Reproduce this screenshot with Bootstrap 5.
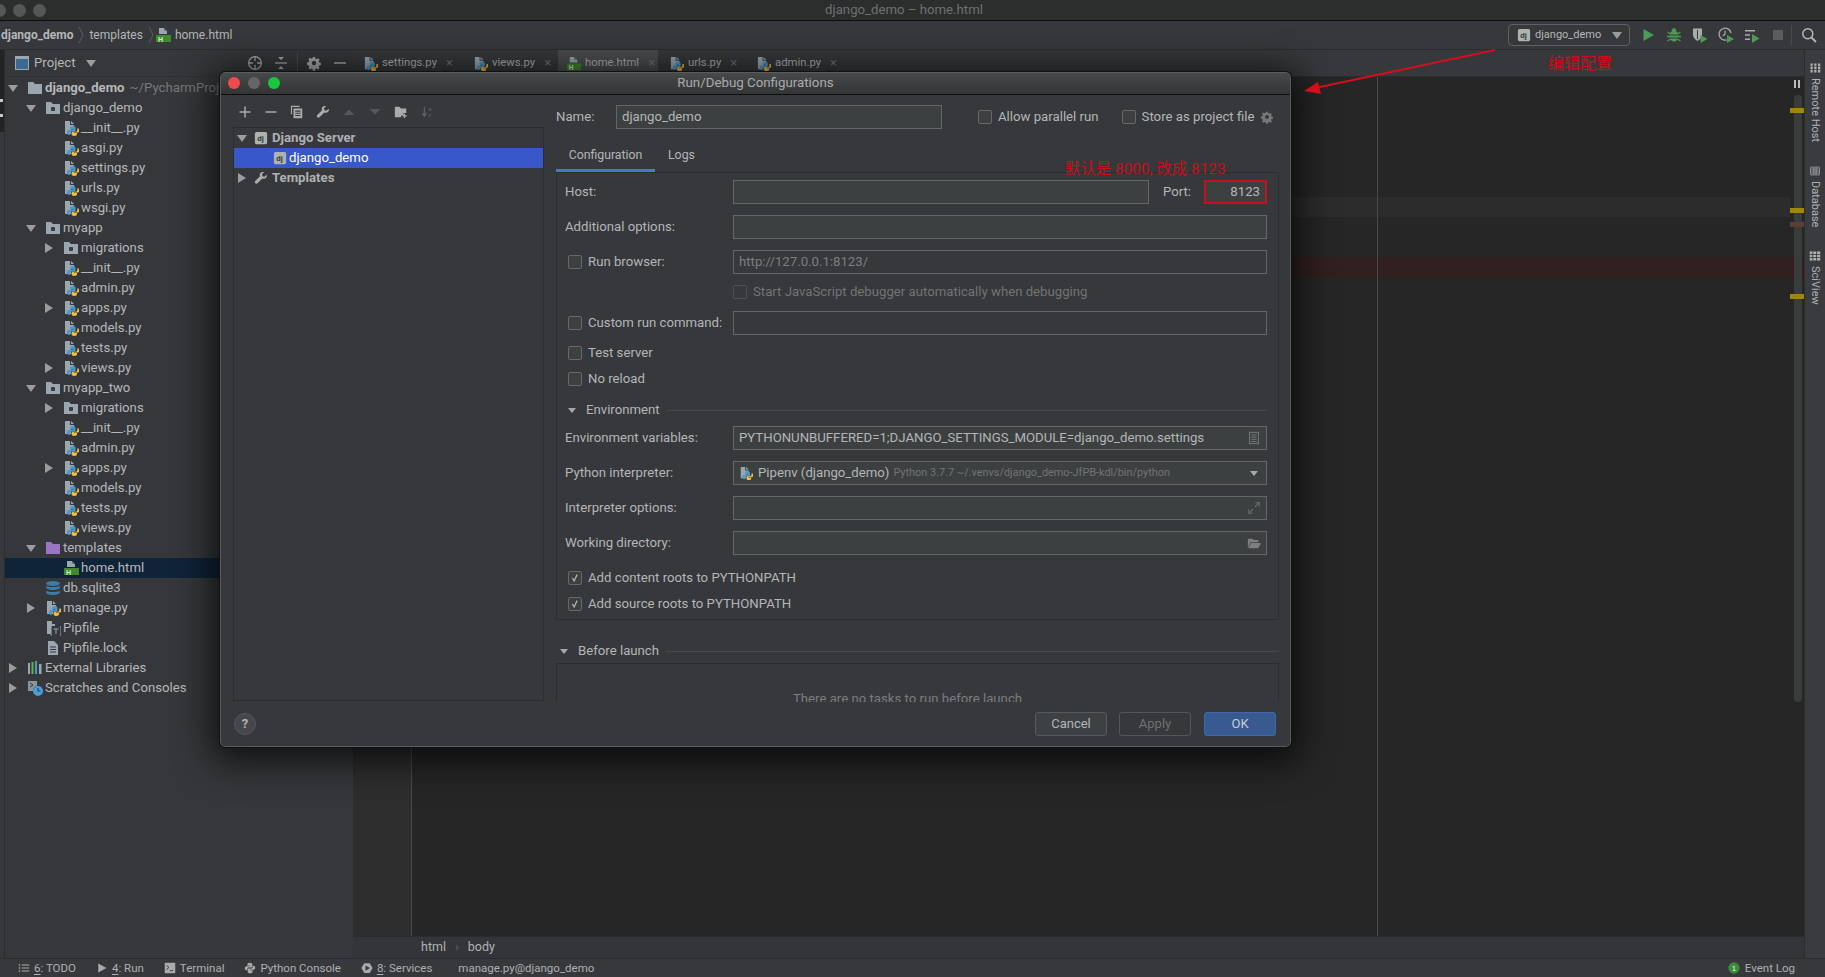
<!DOCTYPE html>
<html lang="en">
<head>
<meta charset="utf-8">
<title>django_demo – home.html</title>
<link href="https://cdn.jsdelivr.net/npm/bootstrap@5.3.0/dist/css/bootstrap.min.css" rel="stylesheet">
<style>
html,body{height:100%;overflow:hidden}
body{background:#36383b;color:#b4b6b8;font-family:Roboto,"Liberation Sans",sans-serif;font-size:13.2px;line-height:20px}
.wbar{height:21px;background:#2c2d2d;border-bottom:1px solid #0c0c0c}
.wdot{width:13px;height:13px;border-radius:50%;background:#565656}
.wdots{width:0;margin-left:-7px;gap:7px}
.wtitle{color:#707070;font-size:13.2px;line-height:20px;padding-right:10px}
.tbar{height:29px;background:#36383b;border-bottom:1px solid #2b2c2e;font-size:12px;padding-left:1px}
.tbar>.ico16{margin-left:-4px}
.crumbsep{width:7px;height:20px;margin:0 4px 0 5px}
.slot{width:26px;height:24px;flex:none}
.ico16{width:16px;height:16px;flex:none}
.ico14{width:14px;height:14px;flex:none}
.tb-right{padding-right:3px}
.runcombo{width:122px;height:22px;border:1px solid #5e6062;border-radius:4px;padding:0 7px 0 8px;margin-right:5px;font-size:11px;color:#b4b6b8}
.tri-d{width:0;height:0;border-left:5px solid transparent;border-right:5px solid transparent;border-top:7px solid #9a9c9e}
.tri-r{width:0;height:0;border-top:5px solid transparent;border-bottom:5px solid transparent;border-left:8px solid #9a9c9e}
.tri-s{width:0;height:0;border-left:4px solid transparent;border-right:4px solid transparent;border-top:5px solid #a6a8aa}
.workarea{height:907px}
.lstrip{width:5px;background:#36383b;border-right:1px solid #2b2c2e}
.lstrip-top{height:82px;background:#222324;padding-top:49px}
.lstrip-top span{display:block;width:3px;height:3px;background:#c8c8c8;margin-bottom:12px}
.pane{width:348px;background:#35373a}
.phead{height:27px;border-bottom:1px solid #2f3134;padding-left:10px;font-size:13.2px}
.phead-title{width:52px;margin-left:5px}
.phead-tools{margin-left:auto}
.vsep{width:1px;height:20px;background:#4a4c4e}
.phead-tools .vsep{margin:0 3px}
.tree{margin:0;padding:1px 0 0;font-size:13.2px}
.trow{height:20px;white-space:nowrap;color:#b6b8ba}
.tw{width:10px;flex:none;margin-right:9px;display:flex;justify-content:center}
.trow .ico14{width:16px;height:16px;margin-right:2px}
.l0{padding-left:3px}.l1{padding-left:21px}.l2{padding-left:39px}
.trow.sel{background:#0f2339}
.trow.root span{font-weight:700}
.hint{color:#77797b;margin-left:5px}
.trow.root span.hint{font-weight:400}
.edcol{min-width:0}
.tabs{height:27px;background:#36383b;border-bottom:1px solid #2b2c2e;font-size:11.3px;padding-left:6px}
.tabx{padding:0 0 0 4px;height:26px;color:#b0b2b4;flex:none}
.tabx.on{background:#4b4d50}
.tabx .ico14{width:15px;height:15px}
.tabx .xx{margin:0 0 0 9px;color:#6d6f71;font-size:13px}
.tab-a{width:110px}.tab-b{width:89px}.tab-c{width:100px}.tab-d{width:87px;margin-left:7px}.tab-e{width:100px}
.gutter{width:59px;background:#2e2e2f;border-right:1px solid #4a4a4a}
.code{background:#262626;position:relative;overflow:hidden}
.caretrow{height:20px;margin-top:120px;background:#2c2c2c;margin-right:14px}
.errrow{height:20px;margin-top:40px;background:#321f1f}
.marginline{position:absolute;left:965px;top:0;bottom:0;width:1px;background:#4a4a4a}
.scrolltrack{position:absolute;right:2px;top:18px;width:8px;height:607px;border-radius:4px;background:#3a3b3b}
.pausebar{position:absolute;right:4px;top:3px;width:6px;height:8px;border-left:2px solid #bcbcbc;border-right:2px solid #bcbcbc}
.mark{position:absolute;right:0;width:14px;height:2px;background:#a08510}
.m1{top:31px}.m2{top:131px}.m3{top:145px;background:#5a3f38}.m4{top:217px}
.bread{height:22px;background:#333538;border-top:1px solid #2a2b2d;padding:0 0 2px 68px;font-size:12.5px;color:#b0b2b4;line-height:18px}
.bread .sp{margin:0 9px;color:#666}
.rstrip{width:21px;background:#393b3e;border-left:1px solid #2b2c2e;padding-top:12px;font-size:11px;color:#b0b2b4}
.rstrip .ico14{width:12px;height:12px}
.vlabel{writing-mode:vertical-rl;line-height:14px;white-space:nowrap;margin-top:4px}
.v1{margin-bottom:23px}.v2{margin-bottom:22px}
.status{height:19px;background:#36383b;border-top:1px solid #2b2c2e;font-size:11.5px;padding:0 30px 0 18px;color:#aeb0b2;line-height:18px}
.sitem{margin-right:20px}
.sitem.wide{margin-right:26px}
.sitem .ico14{width:12px;height:12px;margin-right:4px}
.sitem u{text-underline-offset:2px}
.dialog{position:absolute;left:220px;top:72px;width:1071px;height:675px;background:#36383b;border-radius:5px;border:1px solid #5a5c5e;outline:1px solid #111;box-shadow:0 6px 36px 8px rgba(0,0,0,.72);overflow:hidden;font-size:13.2px;z-index:5}
.dtitle{height:22px;background:linear-gradient(#47494b,#333436);border-bottom:1px solid #0e0e0e;position:relative;color:#a9abad;font-size:13.3px;line-height:20px}
.tl{width:12px;height:12px;border-radius:50%}
.tls{position:absolute;left:7px;top:4px;gap:8px}
.tl-r{background:#f04a4a}.tl-g{background:#646567}.tl-v{background:#1bc63f}
.dbody{height:607px}
.dleft{width:323px;padding-left:11px;flex:none}
.dtools{height:32px;padding-top:1px}
.dtree{width:311px;height:574px;border:1px solid #2c2d2f;margin-left:1px}
.drow{height:20px;white-space:nowrap;padding-left:3px;color:#b2b4b6}
.drow b{font-weight:700;color:#aeb0b2}
.drow .tw{margin-right:7px;margin-left:0}
.drow.on{background:#3857c8;color:#fff;padding-left:39px}
.drow .dj{margin-right:4px}
.drow.on .dj{margin-right:2px}
.dright{width:723px;margin-left:12px;overflow:hidden;flex:none}
.namerow{height:24px;margin-top:10px}
.lb-name{width:60px}
.f-name{width:326px}
.form-control.fld{height:24px;min-height:24px;padding:0 5px;background:#3d4041;border:1px solid #646668;border-radius:0;color:#b4b6b8;font-size:13.2px;line-height:22px;box-shadow:none}
.form-control.fld.dimf{background:#36383b}
.form-control.fld.lite{background:#36383b;color:#7d7f81}
.fld.withend{display:flex;align-items:center;justify-content:space-between}
.chk{display:flex;align-items:center;height:20px;white-space:nowrap;margin-left:3px}
.form-check-input.cbx{width:14px;height:14px;margin:0 6px 0 0;background-color:#3d4041;border:1px solid #66686a;border-radius:2px;box-shadow:none;flex:none}
.form-check-input.cbx:checked{background-color:#3d4041;border-color:#66686a;background-size:12px;background-image:url("data:image/svg+xml,%3csvg xmlns='http://www.w3.org/2000/svg' viewBox='0 0 14 14'%3e%3cpath fill='none' stroke='%23bbb' stroke-width='1.4' d='M4 7l2 3.5L9.5 3'/%3e%3c/svg%3e")}
.form-check-input.cbx.off{border-color:#4c4e50;background-color:#36383b}
.gp1{margin-left:36px}.gp2{margin-left:23px}
.gear{margin-left:6px;opacity:.55}
.dtabs{height:43px;margin:0;padding:0;align-items:flex-end;border:0}
.dtabs .nav-link{padding:0;height:29px;line-height:24px;color:#b4b6b8;font-size:12.3px;border:0;border-radius:0;background:none}
.dtabs .t1{width:99px;text-align:center;border-bottom:3px solid #4a78c2}
.dtabs .t2{margin-left:13px}
.dpanel{height:448px;border:1px solid #2c2d2f;padding:7px 11px 0 8px}
.fr{height:24px}
.lbl{width:168px;flex:none;white-space:nowrap}
.m11{margin-top:11px}.m8{margin-top:8px}.m9{margin-top:9px}.m6{margin-top:6px}.m13{margin-top:13px}.m21{margin-top:21px}
.jsrow{height:20px;margin-top:8px;padding-left:168px;color:#727476}
.f-host{width:416px}
.lb-port{margin-left:14px;width:41px}
.f-port{width:63px;text-align:right;padding-right:5px!important;border:2px solid #c80f1c!important;line-height:20px!important}
.sect{height:20px;white-space:nowrap}
.sect .tri-s{margin-right:10px}
.sect.env{margin-left:3px}
.sect .rule{height:1px;background:#48494b;margin-left:7px}
.ghostnote{height:100px;border:1px solid #2c2d2f;padding:25px 20px 0 0;color:#7b7d7f;margin-top:2px;text-align:center}
.sect.bef{margin-left:4px}
.ifaded{font-size:10.9px;color:#727476;margin-left:4px}
.pyenv{margin-right:5px}
.fld .tri-s{margin-right:3px}
.dfoot{height:44px;padding:11px 14px 0 13px}
.helpb{width:22px;height:22px;border-radius:50%;background:#45484a;border:1px solid #55575a;color:#b0b2b4;font-size:13px;font-weight:700;line-height:20px;padding:0;text-align:center}
.btn.dbtn{width:72px;height:24px;padding:0;border-radius:3px;font-size:13px;line-height:22px;background:#3e4143;border:1px solid #585a5c;color:#b4b6b8}
.btn.dbtn.dis{background:#36383b;border-color:#545658;color:#6f7173;margin-left:12px;opacity:1}
.btn.dbtn.okb{background:#385a90;border-color:#3e68a8;color:#c8ccd2;margin-left:13px}
.dfoot .btngrp{margin-top:-1px}
.anno{position:absolute;color:#c80f1c;font-family:Roboto,"Noto Sans CJK SC",sans-serif;line-height:20px;white-space:nowrap;z-index:7}
.a1{left:1548px;top:54px;font-size:16px}
.a2{left:1065px;top:159px;font-size:15.4px}
.arrowsvg{position:absolute;left:1295px;top:44px;width:210px;height:56px;z-index:6}
</style>
</head>
<body class="d-flex flex-column">
<svg width="0" height="0" class="position-absolute">
<defs>
<symbol id="py" viewBox="0 0 16 16"><path d="M2 1h5v4h4v2H8v7H2z" fill="#9aa7b0"/><path d="M8 1l3 3H8z" fill="#9aa7b0"/><path d="M10 6c-2 0-3 .7-3 2v1.4h3.2v.6H6c-1.300 0-2 1-2 2.200S4.700 15 6 15h.8v-1.600c0-1 .8-1.800 1.800-1.800h2.500c.8 0 1.400-.6 1.400-1.400V8c0-1.400-1-2-2.500-2z" fill="#4a98d0"/><path d="M11 16c2 0 3-.5 3-1.700v-1.300h-3.200v-.5H15c1 0 1.500-1 1.500-2s-.5-2-1.500-2h-.7v1.500c0 1-.8 1.800-1.800 1.800H10c-.8 0-1.400.6-1.400 1.400v1.100C8.600 15.500 9.600 16 11 16z" fill="#f0c040"/></symbol>
<symbol id="html" viewBox="0 0 16 16"><path d="M4 1h5v3h3v3H4z" fill="#9aa7b0"/><path d="M9 1l3 3H9z" fill="#6f7a82"/><rect x="1" y="8" width="15" height="7" fill="#3f8a2e"/><text x="3" y="14.500" font-size="7" font-weight="700" fill="#d8e8d0" font-family="Liberation Sans">H</text></symbol>
<symbol id="fold" viewBox="0 0 16 16"><path d="M1 2h5l2 2h7v10H1z" fill="#9aa7b0"/></symbol>
<symbol id="mod" viewBox="0 0 16 16"><path d="M1 2h5l2 2h7v10H1z" fill="#9aa7b0"/><rect x="6" y="7" width="4" height="4" rx="1" fill="#3a3c3f"/></symbol>
<symbol id="pur" viewBox="0 0 16 16"><path d="M1 2h5l2 2h7v10H1z" fill="#9876c4"/></symbol>
<symbol id="db" viewBox="0 0 16 16"><ellipse cx="8" cy="3.500" rx="6.800" ry="2.500" fill="#3f7ca3"/><path d="M1.200 5v2.500C1.200 9 4.200 10 8 10s6.800-1 6.800-2.500V5C14.800 6.500 11.800 7 8 7S1.200 6.500 1.200 5z" fill="#3f7ca3"/><path d="M1.200 10v2.500C1.200 14 4.200 15 8 15s6.800-1 6.800-2.500V10c0 1.500-3 2-6.800 2s-6.800-.5-6.800-2z" fill="#3f7ca3"/></symbol>
<symbol id="pipf" viewBox="0 0 16 16"><path d="M2 1h5v3h3v2H6v8H2z" fill="#9aa7b0"/><path d="M7 7H6v8h1M15 7h1v8h-1" fill="none" stroke="#9aa7b0"/><path d="M8.500 9h5M11 9v5" stroke="#9aa7b0" fill="none"/></symbol>
<symbol id="doc" viewBox="0 0 16 16"><path d="M3 1h6l4 4v10H3z" fill="#9aa7b0"/><path d="M5 7h6M5 9.500h6M5 12h6" stroke="#36383b"/></symbol>
<symbol id="libs" viewBox="0 0 16 16"><rect x="1" y="3" width="2" height="11" fill="#9aa7b0"/><rect x="4.500" y="2" width="2" height="12" fill="#62b543"/><rect x="8" y="1" width="2" height="13" fill="#4a98d0"/><rect x="12" y="4" width="2.500" height="10" fill="#9aa7b0"/></symbol>
<symbol id="scr" viewBox="0 0 16 16"><path d="M1 1h9v5a5 5 0 0 0-4 5H1z" fill="#8a949c"/><path d="M3 3l3 2-3 2" stroke="#36383b" fill="none"/><circle cx="11" cy="11" r="5" fill="#4a9fd8"/><path d="M11 8v3h2.500" stroke="#23425a" fill="none" stroke-width="1.200"/></symbol>
<symbol id="dj" viewBox="0 0 16 16"><rect x="1" y="1" width="14" height="14" rx="2" fill="#afb1b3"/><text x="3.800" y="11" font-size="8.500" font-weight="700" fill="#1f3b2a" font-family="Liberation Sans">dj</text></symbol>
<symbol id="wr" viewBox="0 0 16 16"><path d="M14.500 4.200l-2.600 2.400-2.200-.6-.6-2.200L11.500 1.300C9.600.6 7.500 1.200 6.800 3c-.4 1-.3 2 .1 2.900L1.400 11.400c-.7.700-.7 1.900 0 2.600s1.900.7 2.600 0l5.500-5.500c.9.400 2 .5 3 .1 1.800-.7 2.800-2.700 2-4.400z" fill="#a9abad"/></symbol>
<symbol id="tgt" viewBox="0 0 16 16"><circle cx="8" cy="8" r="6.300" fill="none" stroke="#a9abad" stroke-width="1.300"/><path d="M8 1v5M8 10v5M1 8h5M10 8h5" stroke="#a9abad" stroke-width="1.300"/></symbol>
<symbol id="clps" viewBox="0 0 16 16"><path d="M2 8h12" stroke="#a9abad" stroke-width="1.300"/><path d="M5 2l3 3 3-3zM5 14l3-3 3 3z" fill="#a9abad"/></symbol>
<symbol id="gr" viewBox="0 0 16 16"><path d="M6.700 1h2.600l.4 2 1.300.6 1.800-1.100 1.800 1.800-1.100 1.800.6 1.300 2 .4v2.600l-2 .4-.6 1.300 1.100 1.800-1.800 1.800-1.800-1.100-1.300.6-.4 2H6.700l-.4-2-1.300-.6-1.800 1.100-1.800-1.800 1.100-1.800-.6-1.300-2-.4V7.200l2-.4.6-1.300-1.100-1.800 1.800-1.800 1.800 1.100 1.300-.6z" fill="#a9abad" transform="translate(1.200 1.200) scale(.85)"/><circle cx="8" cy="8" r="2.200" fill="#36383b"/></symbol>
<symbol id="run" viewBox="0 0 16 16"><path d="M3.500 2v12L14 8z" fill="#499c54"/></symbol>
<symbol id="run2" viewBox="0 0 16 16"><path d="M3 2v12L14 8z" fill="#a9abad"/></symbol>
<symbol id="bug" viewBox="0 0 16 16"><ellipse cx="8" cy="9" rx="4.500" ry="5.500" fill="#499c54"/><circle cx="8" cy="3.500" r="2.300" fill="#499c54"/><path d="M1.500 5l3 2M14.500 5l-3 2M1 9.500h3M15 9.500h-3M1.500 14l3-2M14.500 14l-3-2" stroke="#499c54" stroke-width="1.300"/><path d="M3.500 8h9M3.500 11h9" stroke="#36383b"/></symbol>
<symbol id="cov" viewBox="0 0 16 16"><path d="M1 1.500h9v6c0 3-2 5-4.500 6.500C3 12.500 1 10.500 1 7.500z" fill="#a9abad"/><path d="M5.500 3v9" stroke="#36383b"/><path d="M8.500 8v8l7-4z" fill="#499c54"/></symbol>
<symbol id="prof" viewBox="0 0 16 16"><path d="M8.500 13A6 6 0 1 1 13 6" fill="none" stroke="#a9abad" stroke-width="1.300"/><path d="M7 3.500V7l-2 2" fill="none" stroke="#a9abad" stroke-width="1.200"/><path d="M9 8v8l7-4z" fill="#499c54"/></symbol>
<symbol id="conc" viewBox="0 0 16 16"><path d="M1 3h10v1.500H1zM1 7.200h5v1.500H1zM1 11.500h5V13H1z" fill="#a9abad"/><path d="M8 7v9l7.500-4.500z" fill="#499c54"/></symbol>
<symbol id="mag" viewBox="0 0 16 16"><circle cx="6.800" cy="6.800" r="5" fill="none" stroke="#b4b6b8" stroke-width="1.500"/><path d="M10.500 10.500l4.500 4.500" stroke="#b4b6b8" stroke-width="1.800"/></symbol>
<symbol id="copy" viewBox="0 0 16 16"><path d="M1 1.500h10M1.700 1.500v9" stroke="#a9abad" stroke-width="1.300" fill="none"/><path d="M4 4h10v11H4z" fill="#a9abad"/><path d="M6 7h6M6 9.500h6M6 12h6" stroke="#36383b" stroke-width="1.200"/></symbol>
<symbol id="nfold" viewBox="0 0 16 16"><path d="M1 2h5l2 2h6v5h-3v3H8v2H1z" fill="#a9abad"/><path d="M12 10v5M9.500 12.500h5" stroke="#a9abad" stroke-width="1.400"/></symbol>
<symbol id="srt" viewBox="0 0 16 16"><path d="M5 2v10" stroke="#5f6163" stroke-width="1.400"/><path d="M1.800 9.500L5 14l3.200-4.500z" fill="#5f6163"/><text x="9.500" y="6.800" font-size="6.500" fill="#5f6163" font-family="Liberation Sans">a</text><text x="9.500" y="14" font-size="6.500" fill="#5f6163" font-family="Liberation Sans">z</text></symbol>
<symbol id="listi" viewBox="0 0 16 16"><path d="M1 3h2v2H1zM1 7h2v2H1zM1 11h2v2H1zM5 3.300h10v1.400H5zM5 7.300h10v1.400H5zM5 11.300h10v1.400H5z" fill="#a9abad"/></symbol>
<symbol id="term" viewBox="0 0 16 16"><rect x="1" y="1" width="14" height="14" fill="#a9abad"/><path d="M3.500 4.500l3 2.800-3 2.800" fill="none" stroke="#36383b" stroke-width="1.300"/><path d="M8 11.500h4" stroke="#36383b" stroke-width="1.300"/></symbol>
<symbol id="pyg" viewBox="0 0 16 16"><path d="M8 1C5.500 1 4.500 2 4.500 3.500V5H8.300v.7H3.200C2 5.700 1 6.700 1 8.300S2 11 3.200 11h1.300V9.300c0-1.200 1-2 2-2h3c1 0 1.700-.7 1.700-1.700V3.500C11 2 10 1 8 1z" fill="#a9abad"/><path d="M8 15c2.500 0 3.500-1 3.500-2.500V11H7.700v-.7h5.100c1.200 0 2.200-1 2.200-2.600S14 5 12.800 5h-1.100v1.700c0 1.200-1 2-2 2h-3c-1 0-1.700.7-1.700 1.700v2.100C5 14 6 15 8 15z" fill="#a9abad"/></symbol>
<symbol id="svc" viewBox="0 0 16 16"><path d="M4.500 1.500h7L15.500 8l-4 6.500h-7L.5 8z" fill="#a9abad"/><path d="M6 4.500v7L12 8z" fill="#36383b"/></symbol>
<symbol id="vars" viewBox="0 0 16 16"><rect x="3" y="1.500" width="10" height="13" fill="none" stroke="#7d7f81"/><path d="M5 4.500h6M5 7h6M5 9.500h6M5 12h6" stroke="#7d7f81"/></symbol>
<symbol id="exp" viewBox="0 0 16 16"><path d="M9 7l4.500-4.500M9.500 2h4.500v4.500M7 9l-4.500 4.500M2 9.500V14h4.500" fill="none" stroke="#6a6c6e" stroke-width="1.200"/></symbol>
<symbol id="opn" viewBox="0 0 16 16"><path d="M1 3h5l1.500 1.500H13V7H4L1 14z" fill="#7d7f81"/><path d="M4.500 8H16l-3 6H1.500z" fill="#7d7f81"/></symbol>
<symbol id="grid1" viewBox="0 0 16 16"><path d="M2 2h3v12H2zM7 2h3v12H7zM12 2h3v12h-3z" fill="#b0b2b4"/><path d="M1 5.500h14M1 10h14" stroke="#393b3e"/></symbol>
<symbol id="dbi" viewBox="0 0 16 16"><path d="M3 2C2 5 2 11 3 14M8 2v12M13 2c1 3 1 9 0 12M5.500 2v12M10.500 2v12" fill="none" stroke="#b0b2b4" stroke-width="1.300"/></symbol>
<symbol id="sci" viewBox="0 0 16 16"><path d="M1 2h14v12H1z" fill="#b0b2b4"/><path d="M1 6h14M1 10h14M5 2v12M10 2v12" stroke="#393b3e" stroke-width="1.200"/></symbol>
<symbol id="evt" viewBox="0 0 16 16"><circle cx="8" cy="8" r="6.500" fill="#3d8a38"/><text x="5.500" y="11.500" font-size="9" fill="#dfe" font-family="Liberation Sans">1</text></symbol>
</defs>
</svg>

<div class="wbar d-flex align-items-center position-relative flex-none">
  <div class="d-flex wdots"><span class="wdot flex-shrink-0"></span><span class="wdot flex-shrink-0"></span><span class="wdot flex-shrink-0"></span></div>
  <div class="wtitle flex-grow-1 text-center">django_demo – home.html</div>
</div>

<div class="tbar d-flex align-items-center">
  <b class="fw-bold">django_demo</b>
  <svg class="crumbsep" viewBox="0 0 7 20"><path d="M1 2l4 8-4 8" fill="none" stroke="#5a5c5e"/></svg>
  <span>templates</span>
  <svg class="crumbsep" viewBox="0 0 7 20"><path d="M1 2l4 8-4 8" fill="none" stroke="#5a5c5e"/></svg>
  <svg class="ico16"><use href="#html"/></svg>
  <span class="ms-1">home.html</span>
  <div class="ms-auto d-flex align-items-center tb-right">
    <div class="runcombo d-flex align-items-center"><svg class="ico14"><use href="#dj"/></svg><span class="ms-1 flex-grow-1">django_demo</span><span class="tri-d"></span></div>
    <div class="slot d-flex align-items-center justify-content-center"><svg class="ico16"><use href="#run"/></svg></div>
    <div class="slot d-flex align-items-center justify-content-center"><svg class="ico16"><use href="#bug"/></svg></div>
    <div class="slot d-flex align-items-center justify-content-center"><svg class="ico16"><use href="#cov"/></svg></div>
    <div class="slot d-flex align-items-center justify-content-center"><svg class="ico16"><use href="#prof"/></svg></div>
    <div class="slot d-flex align-items-center justify-content-center"><svg class="ico16"><use href="#conc"/></svg></div>
    <div class="slot d-flex align-items-center justify-content-center"><svg class="ico16" viewBox="0 0 16 16"><rect x="3" y="3" width="10" height="10" fill="#5a5c5e"/></svg></div>
    <div class="vsep"></div>
    <div class="slot d-flex align-items-center justify-content-center ms-1"><svg class="ico16"><use href="#mag"/></svg></div>
  </div>
</div>

<div class="workarea d-flex flex-grow-1">
  <div class="lstrip"><div class="lstrip-top"><span></span><span></span></div></div>
  <div class="pane d-flex flex-column">
    <div class="phead d-flex align-items-center">
      <svg class="ico14" viewBox="0 0 14 14"><rect x=".5" y=".5" width="13" height="13" fill="#3a6a94" stroke="#9aa7b0"/><rect x=".5" y=".5" width="13" height="2.500" fill="#9aa7b0"/></svg>
      <span class="phead-title">Project</span><span class="tri-d"></span>
      <div class="phead-tools d-flex align-items-center">
        <div class="slot d-flex align-items-center justify-content-center"><svg class="ico16"><use href="#tgt"/></svg></div>
        <div class="slot d-flex align-items-center justify-content-center"><svg class="ico16"><use href="#clps"/></svg></div>
        <div class="vsep"></div>
        <div class="slot d-flex align-items-center justify-content-center"><svg class="ico16"><use href="#gr"/></svg></div>
        <div class="slot d-flex align-items-center justify-content-center"><svg class="ico14" viewBox="0 0 14 14"><path d="M1 7h12" stroke="#a9abad" stroke-width="1.500"/></svg></div>
      </div>
    </div>
    <ul class="tree list-unstyled">
      <li class="trow root l0 d-flex align-items-center"><i class="tw"><i class="tri-d"></i></i><svg class="ico14"><use href="#fold"/></svg><span>django_demo</span><span class="hint">~/PycharmProjects/django_demo</span></li>
      <li class="trow l1 d-flex align-items-center"><i class="tw"><i class="tri-d"></i></i><svg class="ico14"><use href="#mod"/></svg><span>django_demo</span></li>
      <li class="trow l2 d-flex align-items-center"><i class="tw"></i><svg class="ico14"><use href="#py"/></svg><span>__init__.py</span></li>
      <li class="trow l2 d-flex align-items-center"><i class="tw"></i><svg class="ico14"><use href="#py"/></svg><span>asgi.py</span></li>
      <li class="trow l2 d-flex align-items-center"><i class="tw"></i><svg class="ico14"><use href="#py"/></svg><span>settings.py</span></li>
      <li class="trow l2 d-flex align-items-center"><i class="tw"></i><svg class="ico14"><use href="#py"/></svg><span>urls.py</span></li>
      <li class="trow l2 d-flex align-items-center"><i class="tw"></i><svg class="ico14"><use href="#py"/></svg><span>wsgi.py</span></li>
      <li class="trow l1 d-flex align-items-center"><i class="tw"><i class="tri-d"></i></i><svg class="ico14"><use href="#mod"/></svg><span>myapp</span></li>
      <li class="trow l2 d-flex align-items-center"><i class="tw"><i class="tri-r"></i></i><svg class="ico14"><use href="#mod"/></svg><span>migrations</span></li>
      <li class="trow l2 d-flex align-items-center"><i class="tw"></i><svg class="ico14"><use href="#py"/></svg><span>__init__.py</span></li>
      <li class="trow l2 d-flex align-items-center"><i class="tw"></i><svg class="ico14"><use href="#py"/></svg><span>admin.py</span></li>
      <li class="trow l2 d-flex align-items-center"><i class="tw"><i class="tri-r"></i></i><svg class="ico14"><use href="#py"/></svg><span>apps.py</span></li>
      <li class="trow l2 d-flex align-items-center"><i class="tw"></i><svg class="ico14"><use href="#py"/></svg><span>models.py</span></li>
      <li class="trow l2 d-flex align-items-center"><i class="tw"></i><svg class="ico14"><use href="#py"/></svg><span>tests.py</span></li>
      <li class="trow l2 d-flex align-items-center"><i class="tw"><i class="tri-r"></i></i><svg class="ico14"><use href="#py"/></svg><span>views.py</span></li>
      <li class="trow l1 d-flex align-items-center"><i class="tw"><i class="tri-d"></i></i><svg class="ico14"><use href="#mod"/></svg><span>myapp_two</span></li>
      <li class="trow l2 d-flex align-items-center"><i class="tw"><i class="tri-r"></i></i><svg class="ico14"><use href="#mod"/></svg><span>migrations</span></li>
      <li class="trow l2 d-flex align-items-center"><i class="tw"></i><svg class="ico14"><use href="#py"/></svg><span>__init__.py</span></li>
      <li class="trow l2 d-flex align-items-center"><i class="tw"></i><svg class="ico14"><use href="#py"/></svg><span>admin.py</span></li>
      <li class="trow l2 d-flex align-items-center"><i class="tw"><i class="tri-r"></i></i><svg class="ico14"><use href="#py"/></svg><span>apps.py</span></li>
      <li class="trow l2 d-flex align-items-center"><i class="tw"></i><svg class="ico14"><use href="#py"/></svg><span>models.py</span></li>
      <li class="trow l2 d-flex align-items-center"><i class="tw"></i><svg class="ico14"><use href="#py"/></svg><span>tests.py</span></li>
      <li class="trow l2 d-flex align-items-center"><i class="tw"></i><svg class="ico14"><use href="#py"/></svg><span>views.py</span></li>
      <li class="trow l1 d-flex align-items-center"><i class="tw"><i class="tri-d"></i></i><svg class="ico14"><use href="#pur"/></svg><span>templates</span></li>
      <li class="trow sel l2 d-flex align-items-center"><i class="tw"></i><svg class="ico14"><use href="#html"/></svg><span>home.html</span></li>
      <li class="trow l1 d-flex align-items-center"><i class="tw"></i><svg class="ico14"><use href="#db"/></svg><span>db.sqlite3</span></li>
      <li class="trow l1 d-flex align-items-center"><i class="tw"><i class="tri-r"></i></i><svg class="ico14"><use href="#py"/></svg><span>manage.py</span></li>
      <li class="trow l1 d-flex align-items-center"><i class="tw"></i><svg class="ico14"><use href="#pipf"/></svg><span>Pipfile</span></li>
      <li class="trow l1 d-flex align-items-center"><i class="tw"></i><svg class="ico14"><use href="#doc"/></svg><span>Pipfile.lock</span></li>
      <li class="trow l0 d-flex align-items-center"><i class="tw"><i class="tri-r"></i></i><svg class="ico14"><use href="#libs"/></svg><span>External Libraries</span></li>
      <li class="trow l0 d-flex align-items-center"><i class="tw"><i class="tri-r"></i></i><svg class="ico14"><use href="#scr"/></svg><span>Scratches and Consoles</span></li>
    </ul>
  </div>

  <div class="edcol d-flex flex-column flex-grow-1">
    <div class="tabs d-flex align-items-start">
      <div class="tabx tab-a d-flex align-items-center"><svg class="ico14"><use href="#py"/></svg><span class="ms-1">settings.py</span><span class="xx">×</span></div>
      <div class="tabx tab-b d-flex align-items-center"><svg class="ico14"><use href="#py"/></svg><span class="ms-1">views.py</span><span class="xx">×</span></div>
      <div class="tabx on tab-c d-flex align-items-center"><svg class="ico14 ms-1"><use href="#html"/></svg><span class="ms-1">home.html</span><span class="xx">×</span></div>
      <div class="tabx tab-d d-flex align-items-center"><svg class="ico14"><use href="#py"/></svg><span class="ms-1">urls.py</span><span class="xx">×</span></div>
      <div class="tabx tab-e d-flex align-items-center"><svg class="ico14"><use href="#py"/></svg><span class="ms-1">admin.py</span><span class="xx">×</span></div>
    </div>
    <div class="d-flex flex-grow-1">
      <div class="gutter"></div>
      <div class="code flex-grow-1">
        <div class="caretrow"></div>
        <div class="errrow"></div>
        <div class="marginline"></div>
        <div class="scrolltrack"></div>
        <div class="pausebar"></div>
        <div class="mark m1"></div><div class="mark m2"></div><div class="mark m3"></div><div class="mark m4"></div>
      </div>
    </div>
    <div class="bread d-flex align-items-center"><span>html</span><span class="sp">›</span><span>body</span></div>
  </div>

  <div class="rstrip d-flex flex-column align-items-center">
    <svg class="ico14"><use href="#grid1"/></svg><div class="vlabel v1">Remote Host</div>
    <svg class="ico14"><use href="#dbi"/></svg><div class="vlabel v2">Database</div>
    <svg class="ico14"><use href="#sci"/></svg><div class="vlabel">SciView</div>
  </div>
</div>

<div class="status d-flex align-items-center">
  <div class="sitem d-flex align-items-center"><svg class="ico14"><use href="#listi"/></svg><span><u>6</u>: TODO</span></div>
  <div class="sitem d-flex align-items-center"><svg class="ico14"><use href="#run2"/></svg><span><u>4</u>: Run</span></div>
  <div class="sitem d-flex align-items-center"><svg class="ico14"><use href="#term"/></svg><span>Terminal</span></div>
  <div class="sitem d-flex align-items-center"><svg class="ico14"><use href="#pyg"/></svg><span>Python Console</span></div>
  <div class="sitem wide d-flex align-items-center"><svg class="ico14"><use href="#svc"/></svg><span><u>8</u>: Services</span></div>
  <div class="sitem">manage.py@django_demo</div>
  <div class="ms-auto d-flex align-items-center"><svg class="ico14 me-1"><use href="#evt"/></svg><span>Event Log</span></div>
</div>

<svg class="arrowsvg" viewBox="0 0 210 56"><path d="M200 6L20 44" stroke="#d0101c" stroke-width="2" fill="none"/><path d="M9 47L23 38 26 50z" fill="#d0101c"/></svg>
<div class="anno a1">编辑配置</div>

<div class="dialog">
  <div class="dtitle text-center">
    <div class="tls d-flex"><span class="tl tl-r"></span><span class="tl tl-g"></span><span class="tl tl-v"></span></div>
    Run/Debug Configurations
  </div>
  <div class="dbody d-flex">
    <div class="dleft">
      <div class="dtools d-flex align-items-center">
        <div class="slot d-flex align-items-center justify-content-center"><svg class="ico14" viewBox="0 0 14 14"><path d="M7 1.500v11M1.500 7h11" stroke="#a9abad" stroke-width="1.500"/></svg></div>
        <div class="slot d-flex align-items-center justify-content-center"><svg class="ico14" viewBox="0 0 14 14"><path d="M1.500 7h11" stroke="#a9abad" stroke-width="1.500"/></svg></div>
        <div class="slot d-flex align-items-center justify-content-center"><svg class="ico14"><use href="#copy"/></svg></div>
        <div class="slot d-flex align-items-center justify-content-center"><svg class="ico14"><use href="#wr"/></svg></div>
        <div class="slot d-flex align-items-center justify-content-center"><svg class="ico14" viewBox="0 0 14 14"><path d="M1.500 10L7 4.500 12.500 10z" fill="#55575a"/></svg></div>
        <div class="slot d-flex align-items-center justify-content-center"><svg class="ico14" viewBox="0 0 14 14"><path d="M1.500 4L7 9.500 12.500 4z" fill="#55575a"/></svg></div>
        <div class="slot d-flex align-items-center justify-content-center"><svg class="ico14"><use href="#nfold"/></svg></div>
        <div class="slot d-flex align-items-center justify-content-center"><svg class="ico14"><use href="#srt"/></svg></div>
      </div>
      <div class="dtree">
        <div class="drow d-flex align-items-center"><i class="tw"><i class="tri-d"></i></i><svg class="ico14 dj"><use href="#dj"/></svg><b>Django Server</b></div>
        <div class="drow on d-flex align-items-center"><svg class="ico14 dj"><use href="#dj"/></svg><span>django_demo</span></div>
        <div class="drow d-flex align-items-center"><i class="tw"><i class="tri-r"></i></i><svg class="ico14 dj"><use href="#wr"/></svg><b>Templates</b></div>
      </div>
    </div>
    <div class="dright">
      <div class="namerow d-flex align-items-center">
        <span class="lb-name">Name:</span>
        <div class="form-control fld f-name">django_demo</div>
        <label class="chk gp1"><input class="form-check-input cbx" type="checkbox">Allow parallel run</label>
        <label class="chk gp2"><input class="form-check-input cbx" type="checkbox">Store as project file</label>
        <svg class="ico14 gear"><use href="#gr"/></svg>
      </div>
      <ul class="nav dtabs d-flex">
        <li class="nav-item"><a class="nav-link t1">Configuration</a></li>
        <li class="nav-item"><a class="nav-link t2">Logs</a></li>
      </ul>
      <div class="dpanel">
        <div class="fr d-flex align-items-center"><span class="lbl">Host:</span><input class="form-control fld f-host" type="text"><span class="lb-port">Port:</span><div class="form-control fld f-port">8123</div></div>
        <div class="fr m11 d-flex align-items-center"><span class="lbl">Additional options:</span><input class="form-control fld flex-grow-1" type="text"></div>
        <div class="fr m11 d-flex align-items-center"><span class="lbl"><label class="chk"><input class="form-check-input cbx" type="checkbox">Run browser:</label></span><div class="form-control fld lite flex-grow-1">http://127.0.0.1:8123/</div></div>
        <div class="jsrow d-flex align-items-center"><input class="form-check-input cbx off" type="checkbox">Start JavaScript debugger automatically when debugging</div>
        <div class="fr m9 d-flex align-items-center"><span class="lbl"><label class="chk"><input class="form-check-input cbx" type="checkbox">Custom run command:</label></span><div class="form-control fld dimf flex-grow-1"></div></div>
        <label class="chk m8"><input class="form-check-input cbx" type="checkbox">Test server</label>
        <label class="chk m6"><input class="form-check-input cbx" type="checkbox">No reload</label>
        <div class="sect env m11 d-flex align-items-center"><span class="tri-s"></span><span>Environment</span><span class="rule flex-grow-1"></span></div>
        <div class="fr m6 d-flex align-items-center"><span class="lbl">Environment variables:</span><div class="form-control fld withend flex-grow-1"><span>PYTHONUNBUFFERED=1;DJANGO_SETTINGS_MODULE=django_demo.settings</span><svg class="ico14"><use href="#vars"/></svg></div></div>
        <div class="fr m11 d-flex align-items-center"><span class="lbl">Python interpreter:</span><div class="form-control fld withend flex-grow-1"><span class="d-flex align-items-center"><svg class="ico14 pyenv"><use href="#py"/></svg>Pipenv (django_demo)<span class="ifaded">Python 3.7.7 ~/.venvs/django_demo-JfPB-kdl/bin/python</span></span><span class="tri-s"></span></div></div>
        <div class="fr m11 d-flex align-items-center"><span class="lbl">Interpreter options:</span><div class="form-control fld withend flex-grow-1"><span></span><svg class="ico14"><use href="#exp"/></svg></div></div>
        <div class="fr m11 d-flex align-items-center"><span class="lbl">Working directory:</span><div class="form-control fld withend flex-grow-1"><span></span><svg class="ico14"><use href="#opn"/></svg></div></div>
        <label class="chk m13"><input class="form-check-input cbx" type="checkbox" checked>Add content roots to PYTHONPATH</label>
        <label class="chk m6"><input class="form-check-input cbx" type="checkbox" checked>Add source roots to PYTHONPATH</label>
      </div>
      <div class="sect bef m21 d-flex align-items-center"><span class="tri-s"></span><span>Before launch</span><span class="rule flex-grow-1"></span></div>
      <div class="ghostnote">There are no tasks to run before launch</div>
    </div>
  </div>
  <div class="dfoot d-flex align-items-start justify-content-between">
    <button class="helpb" type="button">?</button>
    <div class="d-flex btngrp">
      <button class="btn dbtn" type="button">Cancel</button>
      <button class="btn dbtn dis" type="button">Apply</button>
      <button class="btn dbtn okb" type="button">OK</button>
    </div>
  </div>
</div>
<div class="anno a2">默认是 8000, 改成 8123</div>
</body>
</html>
